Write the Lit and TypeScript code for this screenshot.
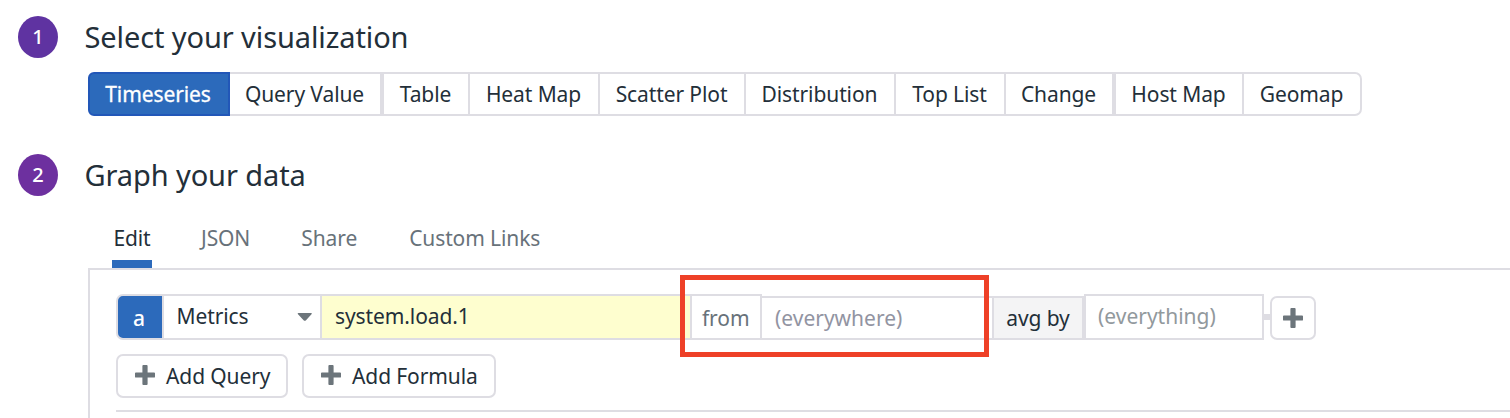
import { LitElement, html, css } from "lit";
import { customElement } from "lit/decorators.js";
import { classMap } from "lit/directives/class-map.js";
import { styleMap } from "lit/directives/style-map.js";

const VISUALIZATIONS = [
  { label: "Timeseries", width: 142, active: true },
  { label: "Query Value", width: 152 },
  { label: "Table", width: 88, group: true },
  { label: "Heat Map", width: 130 },
  { label: "Scatter Plot", width: 146 },
  { label: "Distribution", width: 150 },
  { label: "Top List", width: 110 },
  { label: "Change", width: 108 },
  { label: "Host Map", width: 130, group: true },
  { label: "Geomap", width: 118 },
];

const plus = html`<svg class="plus" width="20" height="20" viewBox="0 0 20 20">
  <path fill="#6c757b" d="M8.3 0h3.4q.9 0 .9.9v6.5h6.5q.9 0 .9.9v3.4q0 .9-.9.9h-6.5v6.5q0 .9-.9.9H8.3q-.9 0-.9-.9v-6.5H.9q-.9 0-.9-.9V8.300q0-.9.9-.9h6.500V.9q0-.9.9-.9z"/>
</svg>`;

@customElement("app-root")
export class AppRoot extends LitElement {
  static styles = css`
    :host {
      display: block;
      height: 418px;
      overflow: hidden;
      position: relative;
      background: #fff;
      color: #232f39;
      font: 21px/30px "Noto Sans", sans-serif;
      letter-spacing: -0.1px;
      white-space: nowrap;
    }
    * { box-sizing: border-box; }
    .step { display: flex; align-items: center; height: 42px; padding-left: 18px; }
    .first { margin-top: 16px; }
    .second { margin-top: 38px; }
    .num {
      width: 40px; height: 42px; border-radius: 50%;
      background: #5f33a1; color: #fff;
      display: flex; align-items: center; justify-content: center;
      font-size: 20px; font-weight: 500;
    }
    .second .num { background: #6d309f; }
    .title { margin: 0 0 0 26.500px; font-size: 29px; font-weight: 400; line-height: 42px; }
    .picker { display: flex; margin: 14px 0 0 88px; height: 44px; }
    .viz {
      display: flex; align-items: center; justify-content: center;
      padding-right: 1px;
      border: 2px solid #dedde3; border-left: 0;
    }
    .group { border-left: 2px solid #dedde3; }
    .active {
      background: #2c6abb; color: #fff; -webkit-text-stroke: 0.3px #fff;
      padding-right: 2px;
      border: 2px solid #2257b8; border-radius: 6px 0 0 6px;
    }
    .viz:last-child { border-radius: 0 7px 7px 0; }
    .tabs { display: flex; margin: 27px 0 0 112px; height: 45px; color: #68727a; }
    .tab { height: 45px; }
    .json { margin-left: 49px; }
    .share { margin-left: 51px; }
    .links { margin-left: 52px; }
    .current { width: 40px; color: #232f39; border-bottom: 8px solid #2c6abb; text-align: center; }
    .panel {
      margin-left: 88px; height: 150px; padding: 24px 0 0 26px;
      border: solid #dedde3; border-width: 2px 0 0 2px;
    }
    .row { display: flex; align-items: flex-end; height: 46px; }
    .cell { display: flex; align-items: center; height: 46px; padding-bottom: 2px; border: 2px solid #dedde3; }
    .letter {
      width: 48px; padding: 2px 2px 0 0; justify-content: center;
      color: #fff; background: #2c6abb; border-radius: 7px 0 0 7px; font-weight: 500;
    }
    .source { width: 158px; padding: 0 7px 2px 12.500px; justify-content: space-between; border-left: 0; }
    .arrow { margin-top: 2px; }
    .metric { width: 370px; padding-left: 13px; background: #fefecf; border-left: 0; }
    .from { width: 70px; padding: 2px 0 0 10px; color: #68727a; border-left: 0; }
    .short { height: 44px; padding-bottom: 0; border-left: 0; }
    .scope { width: 232px; padding-left: 13px; color: #9294a2; letter-spacing: 0; }
    .agg { width: 90px; justify-content: center; background: #f4f4f5; }
    .by { width: 180px; padding-left: 12px; color: #92999d; letter-spacing: 0; }
    .link { width: 6px; height: 6px; margin-bottom: 20px; background: #dedde3; }
    .button {
      display: flex; align-items: center; height: 44px;
      border: 2px solid #dedde3; border-radius: 7px; background: #fff;
    }
    .add { width: 46px; justify-content: center; padding-bottom: 1px; }
    .actions { display: flex; gap: 14px; margin-top: 14px; }
    .action { padding-left: 17px; gap: 11px; }
    .action .plus { margin-bottom: 2px; }
    .query { width: 172px; }
    .formula { width: 194px; }
    .rule { height: 2px; margin-top: 12px; background: #dedde3; }
    .highlight {
      position: absolute; left: 680px; top: 275px; width: 309px; height: 82px;
      border: 5px solid #ee4027;
    }
  `;

  render() {
    return html`
      <div class="step first"><div class="num">1</div><h2 class="title">Select your visualization</h2></div>
      <div class="picker">
        ${VISUALIZATIONS.map(
          (v) => html`<div
            class=${classMap({ viz: true, active: !!v.active, group: !!v.group })}
            style=${styleMap({ width: `${v.width}px` })}
          ><span>${v.label}</span></div>`
        )}
      </div>
      <div class="step second"><div class="num">2</div><h2 class="title">Graph your data</h2></div>
      <div class="tabs">
        <div class="tab current">Edit</div>
        <div class="tab json">JSON</div>
        <div class="tab share">Share</div>
        <div class="tab links">Custom Links</div>
      </div>
      <div class="panel">
        <div class="row">
          <div class="cell letter">a</div>
          <div class="cell source">Metrics
            <svg class="arrow" width="16" height="10" viewBox="0 0 16 10"><path fill="#6c757b" d="M1.500 1h12.500q1.500 0 .5 1.200L9 8.200q-1.200 1.300-2.400 0L1 2.200Q0 1 1.500 1z"/></svg>
          </div>
          <div class="cell metric">system.load.1</div>
          <div class="cell from">from</div>
          <div class="cell short scope">(everywhere)</div>
          <div class="cell short agg">avg by</div>
          <div class="cell by">(everything)</div>
          <div class="link"></div>
          <div class="button add">${plus}</div>
        </div>
        <div class="actions">
          <div class="button action query">${plus}<span>Add Query</span></div>
          <div class="button action formula">${plus}<span>Add Formula</span></div>
        </div>
        <div class="rule"></div>
      </div>
      <div class="highlight"></div>
    `;
  }
}
